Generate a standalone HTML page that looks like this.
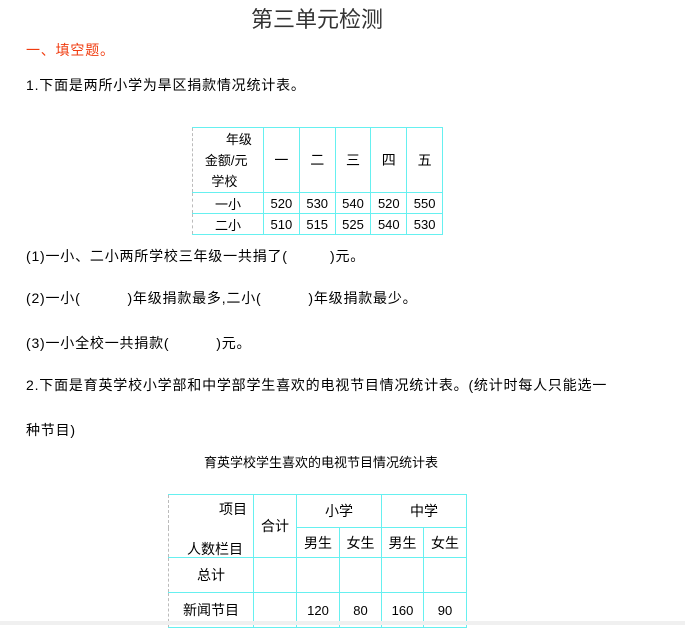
<!DOCTYPE html>
<html><head><meta charset="utf-8"><style>
body{margin:0;width:685px;height:625px;overflow:hidden;background:#fff;font-family:"Liberation Sans","Noto Sans CJK SC",sans-serif;color:#000;position:relative}
.a{position:absolute;white-space:nowrap;font-size:14px;line-height:16px;letter-spacing:.8px}
table{position:absolute;border-collapse:collapse;font-size:13px}
td{border:1px solid #66f0f0;text-align:center;padding:0}
td.l{border-left:1px dashed #bbb}
</style></head><body>
<div class="a" style="left:251px;top:7px;font-size:22px;line-height:26px;color:#333;letter-spacing:0">第三单元检测</div>
<div class="a" style="left:26px;top:42px;color:#f03c10">一、填空题。</div>
<div class="a" style="left:26px;top:77px">1.下面是两所小学为旱区捐款情况统计表。</div>
<table style="left:192px;top:127px;width:251px">
<tr style="height:65px"><td class="l" style="width:70px;line-height:21px">&nbsp;&nbsp;&nbsp;&nbsp;&nbsp;&nbsp;年级<br>金额/元&nbsp;<br>学校&nbsp;&nbsp;</td><td style="font-size:14px">一</td><td style="font-size:14px">二</td><td style="font-size:14px">三</td><td style="font-size:14px">四</td><td style="font-size:14px">五</td></tr>
<tr style="height:21px"><td class="l">一小</td><td>520</td><td>530</td><td>540</td><td>520</td><td>550</td></tr>
<tr style="height:21px"><td class="l">二小</td><td>510</td><td>515</td><td>525</td><td>540</td><td>530</td></tr>
</table>
<div class="a" style="left:26px;top:248px">(1)一小、二小两所学校三年级一共捐了(&nbsp;&nbsp;&nbsp;&nbsp;&nbsp;&nbsp;&nbsp;&nbsp;&nbsp;)元。</div>
<div class="a" style="left:26px;top:290px">(2)一小(&nbsp;&nbsp;&nbsp;&nbsp;&nbsp;&nbsp;&nbsp;&nbsp;&nbsp;&nbsp;)年级捐款最多,二小(&nbsp;&nbsp;&nbsp;&nbsp;&nbsp;&nbsp;&nbsp;&nbsp;&nbsp;&nbsp;)年级捐款最少。</div>
<div class="a" style="left:26px;top:335px">(3)一小全校一共捐款(&nbsp;&nbsp;&nbsp;&nbsp;&nbsp;&nbsp;&nbsp;&nbsp;&nbsp;&nbsp;)元。</div>
<div class="a" style="left:26px;top:377px">2.下面是育英学校小学部和中学部学生喜欢的电视节目情况统计表。(统计时每人只能选一</div>
<div class="a" style="left:26px;top:422px">种节目)</div>
<div class="a" style="left:204px;top:455px;font-size:13px;letter-spacing:0">育英学校学生喜欢的电视节目情况统计表</div>
<table style="left:168px;top:494px;width:299px;font-size:14px">
<tr style="height:33px"><td class="l" rowspan="2" style="width:84px;position:relative"><div style="position:absolute;left:50px;top:4px">项目</div><div style="position:absolute;left:18px;top:44px">人数栏目</div></td><td rowspan="2" style="width:42px">合计</td><td colspan="2">小学</td><td colspan="2">中学</td></tr>
<tr style="height:30px"><td style="width:42px">男生</td><td style="width:41px">女生</td><td style="width:41px">男生</td><td>女生</td></tr>
<tr style="height:35px"><td class="l">总计</td><td></td><td></td><td></td><td></td><td></td></tr>
<tr style="height:35px"><td class="l">新闻节目</td><td></td><td style="font-size:13px">120</td><td style="font-size:13px">80</td><td style="font-size:13px">160</td><td style="font-size:13px">90</td></tr>
</table>
<div style="position:absolute;left:0;top:621px;width:685px;height:4px;background:#f0f0f0"></div>
</body></html>
